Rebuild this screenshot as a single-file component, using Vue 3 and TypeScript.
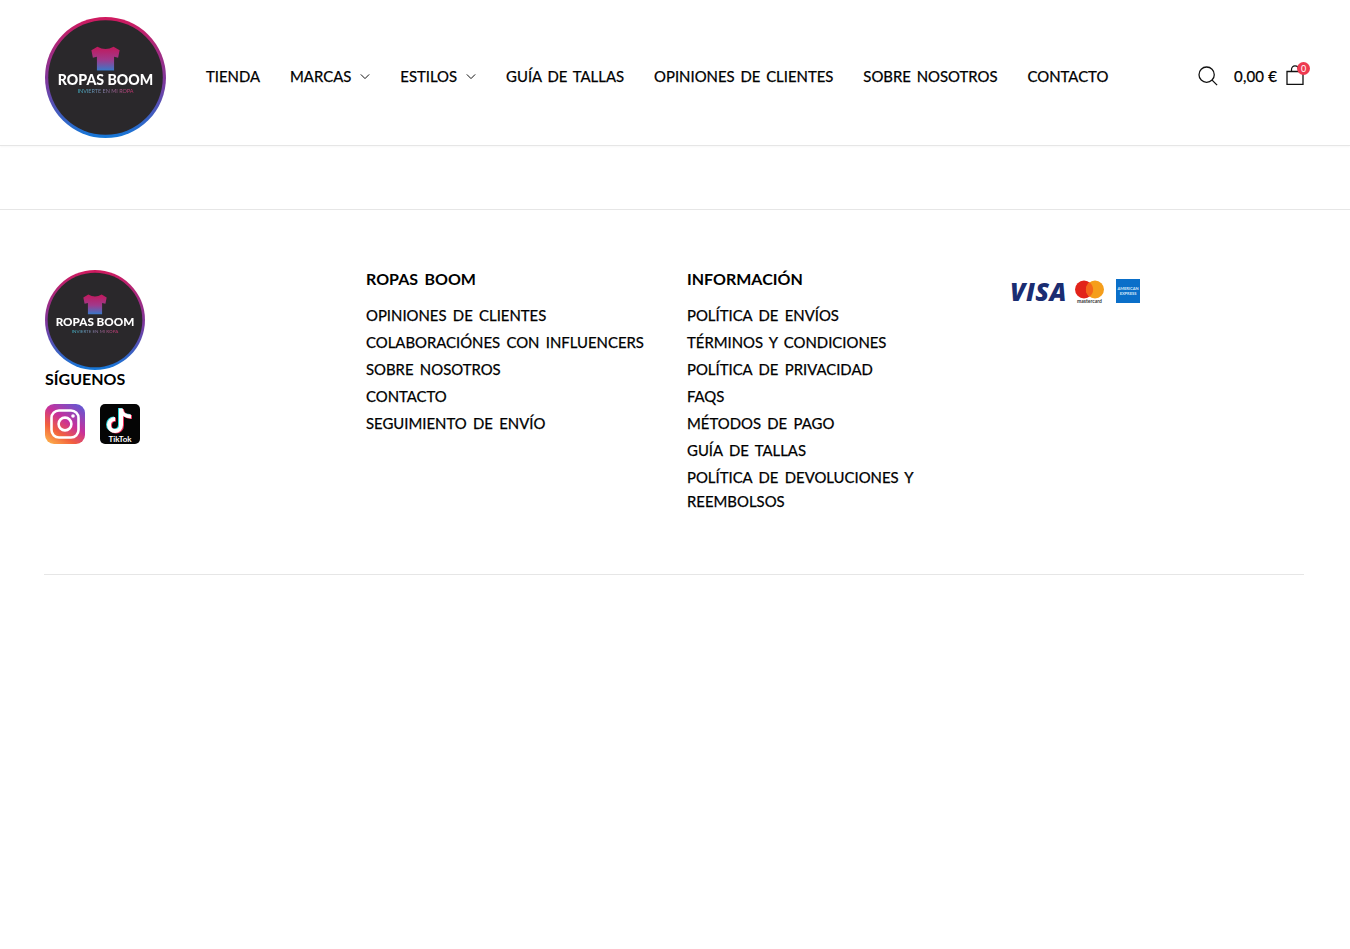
<template>
  <div class="page">
    <svg class="defs" width="0" height="0" aria-hidden="true">
      <defs>
        <linearGradient id="ring" x1="0" y1="0" x2="0" y2="1">
          <stop offset="0" stop-color="#d01a5e" />
          <stop offset="0.55" stop-color="#7b3aa0" />
          <stop offset="1" stop-color="#1478d8" />
        </linearGradient>
        <linearGradient id="shirt" x1="0" y1="0" x2="0" y2="1">
          <stop offset="0" stop-color="#c2185b" />
          <stop offset="0.55" stop-color="#a03a8c" />
          <stop offset="1" stop-color="#3a78c8" />
        </linearGradient>
        <linearGradient id="tagline" x1="0" y1="0" x2="1" y2="0">
          <stop offset="0" stop-color="#3fb4c8" />
          <stop offset="1" stop-color="#c2306a" />
        </linearGradient>
        <linearGradient id="insta" x1="0.1" y1="1" x2="0.8" y2="0">
          <stop offset="0" stop-color="#fdb24a" />
          <stop offset="0.3" stop-color="#f2603e" />
          <stop offset="0.6" stop-color="#c7309b" />
          <stop offset="1" stop-color="#6a55cf" />
        </linearGradient>
        <symbol id="logo" viewBox="0 0 120 120">
          <circle cx="60" cy="60" r="60" fill="url(#ring)" />
          <circle cx="60" cy="60" r="56.8" fill="#2a282b" />
          <path
            d="M52 29.5 Q60 34 68 29.5 L74 33 L72.5 40.5 L68.5 39.5 V53 H51.5 V39.5 L47.5 40.5 L46 33 Z"
            fill="url(#shirt)"
          />
          <text x="60" y="67" class="logo-name" text-anchor="middle">ROPAS BOOM</text>
          <text x="60" y="75" class="logo-tag" text-anchor="middle" fill="url(#tagline)">INVIERTE EN MI ROPA</text>
        </symbol>
      </defs>
    </svg>

    <header class="site-header">
      <svg class="logo-main"><use href="#logo" /></svg>
      <nav class="main-nav">
        <a v-for="item in navItems" :key="item.label" class="nav-link">
          {{ item.label }}
          <svg v-if="item.caret" class="caret" viewBox="0 0 12 8">
            <path d="M1 1.5 L6 6.5 L11 1.5" fill="none" stroke="#111" stroke-width="1.2" />
          </svg>
        </a>
      </nav>
      <div class="header-tools">
        <svg class="search" viewBox="0 0 22 22">
          <circle cx="9.5" cy="9.5" r="8.4" fill="none" stroke="#111" stroke-width="1.4" />
          <path d="M15.5 15.5 L21 21" stroke="#111" stroke-width="1.4" />
        </svg>
        <span class="cart-total">0,00 €</span>
        <div class="bag">
          <svg viewBox="0 0 18 20" width="18" height="20">
            <path d="M1 6.5 H17 V19.3 H1 Z" fill="none" stroke="#111" stroke-width="1.3" />
            <path d="M5.5 6.5 V4.5 C5.5 2.3 7 0.8 9 0.8 C11 0.8 12.5 2.3 12.5 4.5 V6.5" fill="none" stroke="#111" stroke-width="1.2" />
          </svg>
          <span class="badge">0</span>
        </div>
      </div>
    </header>

    <div class="empty-band"></div>

    <footer class="site-footer">
      <div class="footer-cols">
        <div class="footer-col">
          <svg class="logo-small"><use href="#logo" /></svg>
          <h4 class="follow-title">SÍGUENOS</h4>
          <div class="socials">
            <svg class="social" viewBox="0 0 40 40">
              <rect width="40" height="40" rx="9" fill="url(#insta)" />
              <rect x="6.5" y="6.5" width="27" height="27" rx="7.5" fill="none" stroke="#fff" stroke-width="2.6" />
              <circle cx="20" cy="20" r="6.4" fill="none" stroke="#fff" stroke-width="2.6" />
              <circle cx="28" cy="12" r="1.8" fill="#fff" />
            </svg>
            <svg class="social" viewBox="0 0 40 40">
              <rect width="40" height="40" rx="5" fill="#050505" />
              <g fill="none" stroke-width="4">
                <path d="M21 4.5 V21 A6 6 0 1 1 15 15 M21 5.5 C21.6 9.5 25.5 12.5 31 12.5" stroke="#25d4dc" transform="translate(-1 -0.6)" />
                <path d="M21 4.5 V21 A6 6 0 1 1 15 15 M21 5.5 C21.6 9.5 25.5 12.5 31 12.5" stroke="#f0305a" transform="translate(1 0.6)" />
                <path d="M21 4.5 V21 A6 6 0 1 1 15 15 M21 5.5 C21.6 9.5 25.5 12.5 31 12.5" stroke="#fff" />
              </g>
              <text x="20" y="37.5" class="tiktok-name" text-anchor="middle">TikTok</text>
            </svg>
          </div>
        </div>

        <div v-for="col in linkCols" :key="col.title" class="footer-col">
          <h4 class="col-title">{{ col.title }}</h4>
          <ul class="col-links">
            <li v-for="link in col.links" :key="link">{{ link }}</li>
          </ul>
        </div>

        <div class="footer-col">
          <svg class="payments" viewBox="-2 -9 132 40">
            <text x="0" y="22" class="visa" fill="#1a2d72">VISA</text>
            <circle cx="74" cy="10.5" r="9" fill="#e2231a" />
            <circle cx="85" cy="10.5" r="9" fill="#f59e1b" />
            <path d="M79.5 3.3 A9 9 0 0 1 79.5 17.7 A9 9 0 0 1 79.5 3.3 Z" fill="#f4661b" />
            <text x="79.5" y="24" class="mc-name" text-anchor="middle" fill="#333">mastercard</text>
            <rect x="106" y="0" width="24" height="24" fill="#0a6fc9" />
            <text x="118" y="11" class="amex-name" text-anchor="middle">AMERICAN</text>
            <text x="118" y="16" class="amex-name" text-anchor="middle">EXPRESS</text>
          </svg>
        </div>
      </div>
      <div class="footer-rule"></div>
    </footer>
  </div>
</template>

<script setup lang="ts">
interface NavItem {
  label: string;
  caret?: boolean;
}

const navItems: NavItem[] = [
  { label: "TIENDA" },
  { label: "MARCAS", caret: true },
  { label: "ESTILOS", caret: true },
  { label: "GUÍA DE TALLAS" },
  { label: "OPINIONES DE CLIENTES" },
  { label: "SOBRE NOSOTROS" },
  { label: "CONTACTO" },
];

const linkCols = [
  {
    title: "ROPAS BOOM",
    links: [
      "OPINIONES DE CLIENTES",
      "COLABORACIÓNES CON INFLUENCERS",
      "SOBRE NOSOTROS",
      "CONTACTO",
      "SEGUIMIENTO DE ENVÍO",
    ],
  },
  {
    title: "INFORMACIÓN",
    links: [
      "POLÍTICA DE ENVÍOS",
      "TÉRMINOS Y CONDICIONES",
      "POLÍTICA DE PRIVACIDAD",
      "FAQS",
      "MÉTODOS DE PAGO",
      "GUÍA DE TALLAS",
      "POLÍTICA DE DEVOLUCIONES Y REEMBOLSOS",
    ],
  },
];
</script>

<style>
html,
body {
  margin: 0;
  background: #fff;
}

.logo-name {
  font: 900 14px "Lato", "Liberation Sans", sans-serif;
  fill: #fff;
  word-spacing: 0;
}

.logo-tag {
  font: 400 5.4px "Lato", "Liberation Sans", sans-serif;
  word-spacing: 0;
}

.tiktok-name {
  font: 700 8px "Lato", "Liberation Sans", sans-serif;
  fill: #fff;
}

.visa {
  font: italic 800 25px "Open Sans", "Liberation Sans", sans-serif;
  letter-spacing: 0.5px;
}

.mc-name {
  font: 700 5px "Lato", "Liberation Sans", sans-serif;
}

.amex-name {
  font: 700 4px "Lato", "Liberation Sans", sans-serif;
  fill: #d6e8f8;
}
</style>

<style scoped>
.page {
  min-height: 949px;
  background: #fff;
  color: #000;
  font-family: "Lato", "Liberation Sans", sans-serif;
  font-size: 14.9px;
  word-spacing: 2.5px;
}

.defs {
  position: absolute;
}

.site-header {
  display: flex;
  align-items: center;
  height: 146px;
  padding: 7px 45px 0;
  box-sizing: border-box;
  border-bottom: 1px solid #e6e6e6;
  box-shadow: 0 1px 2px rgba(0, 0, 0, 0.03);
}

.logo-main {
  width: 121px;
  height: 121px;
  flex: none;
  margin-top: 2px;
  filter: blur(0.3px);
}

.main-nav {
  display: flex;
  gap: 30px;
  margin-left: 40px;
}

.nav-link {
  display: flex;
  align-items: center;
  gap: 9px;
  line-height: 24px;
  white-space: nowrap;
  word-spacing: 2px;
  -webkit-text-stroke: 0.25px #000;
}

.caret {
  width: 10px;
  height: 7px;
}

.header-tools {
  display: flex;
  align-items: center;
  margin-left: auto;
}

.search {
  width: 20px;
  height: 20px;
}

.cart-total {
  margin-left: 16px;
  font-size: 15px;
  letter-spacing: 0.15px;
  word-spacing: 0;
  -webkit-text-stroke: 0.25px #000;
}

.bag {
  position: relative;
  display: flex;
  margin-left: 9px;
  margin-top: -2px;
  margin-right: 1px;
}

.badge {
  position: absolute;
  top: -3px;
  right: -6px;
  width: 13px;
  height: 13px;
  border-radius: 50%;
  background: #ee3a50;
  color: #fff;
  font-size: 9px;
  line-height: 13px;
  text-align: center;
}

.empty-band {
  height: 63px;
  border-bottom: 1px solid #e6e6e6;
}

.site-footer {
  padding: 60px 46px 0 44px;
}

.footer-cols {
  display: grid;
  grid-template-columns: 321px 321px 323px 1fr;
  padding-left: 1px;
  height: 304px;
}

.logo-small {
  display: block;
  width: 100px;
  height: 100px;
  filter: blur(0.3px);
}

.follow-title {
  margin: 0 0 16px;
  font-size: 16px;
  line-height: 18px;
  font-weight: 700;
}

.socials {
  display: flex;
  gap: 15px;
}

.social {
  width: 40px;
  height: 40px;
}

.col-title {
  margin: 0 0 15px;
  font-size: 16px;
  line-height: 18px;
  font-weight: 700;
}

.col-links {
  list-style: none;
  margin: 0;
  padding: 0;
  max-width: 290px;
}

.col-links li {
  line-height: 24px;
  margin-bottom: 3px;
  -webkit-text-stroke: 0.25px #000;
}

.payments {
  display: block;
  width: 132px;
  height: 40px;
  margin-left: -2px;
}

.footer-rule {
  height: 1px;
  background: #e6e6e6;
}
</style>
